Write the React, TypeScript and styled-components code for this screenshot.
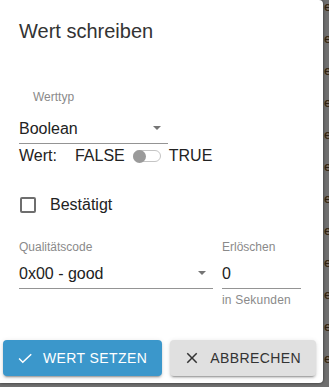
import React from 'react';
import styled, {createGlobalStyle} from 'styled-components'

const GlobalStyle = createGlobalStyle`
  html, body {
    margin: 0;
    padding: 0;
    background-color: #6f6f6f;
    overflow: hidden;
  }

  * {
    box-sizing: border-box;
  }
`

const ArrowDown = () => (
    <svg width="8" height="4" viewBox="0 0 8 4">
        <path d="M0 0h8L4 4z" fill="#757575"/>
    </svg>
)

const CheckIcon = () => (
    <svg width="18" height="18" viewBox="0 0 24 24">
        <path d="M9 16.17L4.83 12l-1.42 1.41L9 19 21 7.59 19.59 6.17z" fill="currentColor"/>
    </svg>
)

const CloseIcon = () => (
    <svg width="18" height="18" viewBox="0 0 24 24">
        <path
            d="M19 6.41L17.59 5 12 10.59 6.41 5 5 6.41 10.59 12 5 17.59 6.41 19 12 13.41 17.59 19 19 17.59 13.41 12z"
            fill="currentColor"/>
    </svg>
)

export default function App() {
    const letters = Array.from({length: 13})

    return (
        <Page>
            <GlobalStyle/>
            <Dialog>
                <Title>Wert schreiben</Title>

                <TypeLabel>Werttyp</TypeLabel>
                <Select width={149}>
                    <span>Boolean</span>
                    <ArrowDown/>
                </Select>

                <ValueRow>
                    <span>Wert:</span>
                    <ValueOption>FALSE</ValueOption>
                    <Switch>
                        <Thumb/>
                    </Switch>
                    <span>TRUE</span>
                </ValueRow>

                <CheckRow>
                    <CheckBox/>
                    <span>Bestätigt</span>
                </CheckRow>

                <FieldGrid>
                    <FieldLabel>Qualitätscode</FieldLabel>
                    <FieldLabel>Erlöschen</FieldLabel>
                    <Select>
                        <span>0x00 - good</span>
                        <ArrowDown/>
                    </Select>
                    <Select>
                        <span>0</span>
                    </Select>
                    <span/>
                    <Helper>in Sekunden</Helper>
                </FieldGrid>

                <Actions>
                    <Button primary>
                        <CheckIcon/>
                        Wert setzen
                    </Button>
                    <Button>
                        <CloseIcon/>
                        Abbrechen
                    </Button>
                </Actions>
            </Dialog>
            <Backdrop>
                {letters.map((_, index) => (
                    <BehindLetter key={`letter_${index}`}>e</BehindLetter>
                ))}
            </Backdrop>
        </Page>
    );
}

const Page = styled.div`
  width: 329px;
  height: 387px;
  display: grid;
  grid-template-columns: 323px 6px;
  grid-template-rows: 383px 4px;
  font-family: "Liberation Sans", Arial, sans-serif;
  color: #222;
`

const Dialog = styled.div`
  grid-row: 1;
  grid-column: 1;
  background-color: #fff;
  border-radius: 0 4px 4px 0;
  box-shadow: 0 0 3px rgba(0, 0, 0, 0.6);
  padding: 19px 22px 0 19px;
  display: flex;
  flex-direction: column;
  position: relative;
  z-index: 1;
`

const Backdrop = styled.div`
  grid-row: 1 / span 2;
  grid-column: 2;
  overflow: hidden;
  margin-top: -9px;
`

const BehindLetter = styled.div`
  height: 32px;
  line-height: 32px;
  font-size: 13px;
  padding-left: 1px;
  color: #2b2115;
  text-shadow: 1px 0 0 #8a5a20;
`

const Title = styled.h2`
  margin: 0;
  font-size: 20px;
  line-height: 24px;
  font-weight: 400;
  color: #333;
`

const TypeLabel = styled.div`
  margin-top: 47px;
  margin-left: 14px;
  font-size: 12px;
  line-height: 14px;
  color: #8a8a8a;
`

const Select = styled.div<{ width?: number }>`
  width: ${p => (p.width ? `${p.width}px` : '100%')};
  margin-top: ${p => (p.width ? '15px' : '0')};
  height: 25px;
  padding-bottom: 5px;
  font-size: 16px;
  line-height: 19px;
  color: #222;
  border-bottom: 1px solid #949494;
  display: flex;
  align-items: center;
  justify-content: space-between;
  padding-right: 7px;

  svg {
    margin-top: -2px;
  }
`

const ValueRow = styled.div`
  margin-top: 2px;
  display: flex;
  align-items: center;
  font-size: 16px;
  line-height: 19px;
  gap: 8px;
`

const ValueOption = styled.span`
  margin-left: 10px;
`

const Switch = styled.div`
  width: 28px;
  height: 12px;
  border: 1px solid #c4c4c4;
  border-radius: 6px;
  background-color: #fff;
  display: flex;
  align-items: center;
  margin-top: 1px;
`

const Thumb = styled.div`
  width: 13px;
  height: 13px;
  margin-left: -1px;
  border-radius: 50%;
  background-color: #9a9a9a;
  flex-shrink: 0;
`

const CheckRow = styled.div`
  margin-top: 30px;
  display: flex;
  align-items: center;
  gap: 14px;
  font-size: 16px;
  line-height: 19px;
`

const CheckBox = styled.div`
  width: 16px;
  height: 16px;
  margin-left: 1px;
  border: 2px solid #6e6e6e;
  border-radius: 2px;
`

const FieldGrid = styled.div`
  margin-top: 26px;
  display: grid;
  grid-template-columns: 194px 1fr;
  column-gap: 9px;
  row-gap: 10px;

  & > *:nth-child(n + 5) {
    margin-top: -6px;
  }
`

const FieldLabel = styled.div`
  font-size: 12px;
  line-height: 14px;
  color: #8a8a8a;
`

const Helper = styled.div`
  font-size: 12px;
  line-height: 14px;
  letter-spacing: 0.2px;
  color: #8a8a8a;
`

const Actions = styled.div`
  margin-top: 33px;
  margin-left: -16px;
  margin-right: -22px;
  display: flex;
  gap: 8px;
`

const Button = styled.button<{ primary?: boolean }>`
  flex-shrink: 0;
  height: 36px;
  padding: 0 15px 0 13px;
  border: none;
  border-radius: 4px;
  display: flex;
  align-items: center;
  gap: 9px;
  white-space: nowrap;
  font-family: "Liberation Sans", Arial, sans-serif;
  font-size: 14px;
  letter-spacing: 0.4px;
  text-transform: uppercase;
  background-color: ${p => (p.primary ? '#3b97cb' : '#e0e0e0')};
  color: ${p => (p.primary ? '#fff' : '#333')};
  box-shadow: 0 3px 1px -2px rgba(0, 0, 0, 0.2), 0 2px 2px 0 rgba(0, 0, 0, 0.14), 0 1px 5px 0 rgba(0, 0, 0, 0.12);
  cursor: pointer;
`
